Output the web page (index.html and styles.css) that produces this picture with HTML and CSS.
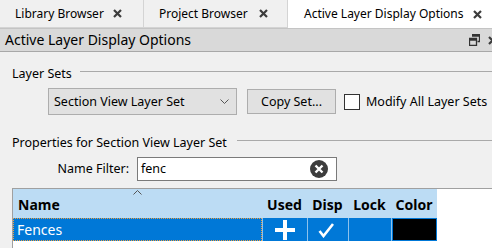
FILE: index.html
```html
<!DOCTYPE html>
<html>
<head>
<meta charset="utf-8">
<link rel="stylesheet" href="styles.css">
</head>
<body>
<div class="tabs">
  <div class="tab tab-lib"><span>Library Browser</span><svg class="x" viewBox="0 0 9 9"><path d="M1 1L8 8M8 1L1 8"/></svg></div>
  <div class="tab tab-proj"><span>Project Browser</span><svg class="x" viewBox="0 0 9 9"><path d="M1 1L8 8M8 1L1 8"/></svg></div>
  <div class="tab tab-active"><span>Active Layer Display Options</span><svg class="x" viewBox="0 0 9 9"><path d="M1 1L8 8M8 1L1 8"/></svg></div>
</div>
<div class="titlebar">
  <span class="title">Active Layer Display Options</span>
  <svg class="restore" viewBox="0 0 11 12"><path d="M3 0.5H10.5V7.5H8.5M3 2H10.5" fill="none"/><path d="M0.5 4.5H7.5V11.5H0.5Z M0.5 6H7.5" fill="none"/></svg>
  <svg class="tx" viewBox="0 0 9 9"><path d="M1 1L8 8M8 1L1 8"/></svg>
</div>
<div class="content">
  <div class="group-head"><span>Layer Sets</span><div class="gline"></div></div>
  <div class="set-row">
    <div class="combo"><span>Section View Layer Set</span><svg class="chev" viewBox="0 0 9 5"><path d="M0.5 0.5L4.5 4.5L8.5 0.5"/></svg></div>
    <div class="btn">Copy Set...</div>
    <div class="check"></div>
    <span class="check-label">Modify All Layer Sets</span>
  </div>
  <div class="group-head group-props"><span>Properties for Section View Layer Set</span><div class="gline"></div></div>
  <div class="filter-row">
    <span class="filter-label">Name Filter:</span>
    <div class="input"><span>fenc</span><svg class="clear" viewBox="0 0 18 18"><circle cx="9" cy="9" r="9"/><path d="M5.5 5.5L12.5 12.5M12.5 5.5L5.5 12.5"/></svg></div>
  </div>
  <div class="table">
    <div class="thead">
      <div class="th th-name">Name<svg class="sort" viewBox="0 0 9 5"><path d="M0.5 4.5L4.5 0.5L8.5 4.5"/></svg></div>
      <div class="th th-used">Used</div>
      <div class="th th-disp">Disp</div>
      <div class="th th-lock">Lock</div>
      <div class="th th-color">Color</div>
    </div>
    <div class="trow">
      <div class="td td-name">Fences</div>
      <div class="td td-used"><svg class="plus" viewBox="0 0 20 20"><path d="M8 0H12V8H20V12H12V20H8V12H0V8H8Z"/></svg></div>
      <div class="td td-disp"><svg class="tick" viewBox="0 0 16 16"><path d="M1.5 9L5.5 14L15 2"/></svg></div>
      <div class="td td-lock"></div>
      <div class="td td-color"><div class="swatch"></div></div>
    </div>
  </div>
</div>
</body>
</html>
```

FILE: styles.css
```css
* { box-sizing: border-box; }
html, body { margin: 0; padding: 0; }
body {
  width: 492px;
  height: 248px;
  overflow: hidden;
  background: #f0f0f0;
  font-family: "Noto Sans", "Open Sans", sans-serif;
  font-size: 12px;
  line-height: 16px;
  color: #000;
}
.tabs {
  display: flex;
  height: 28px;
  background: #f0f0f0;
}
.tab {
  display: flex;
  align-items: center;
  justify-content: space-between;
  height: 28px;
  padding-left: 15px;
  font-size: 12px;
  border-right: 1px solid #d4d4d4;
  border-bottom: 1px solid #d4d4d4;
}
.tab-lib { width: 144px; padding-right: 21px; }
.tab-proj { width: 144px; padding-right: 19px; }
.tab-active {
  flex: 1;
  background: #fff;
  border: none;
  padding-left: 16px;
  padding-right: 10px;
}
.x { width: 9px; height: 9px; }
.x path, .tx path { stroke: #3c3c3c; stroke-width: 2.2; fill: none; }
.titlebar {
  display: flex;
  align-items: center;
  height: 24px;
  background: #d9d9d9;
  border-top: 1px solid #c4c4c4;
  border-bottom: 1px solid #a8a8a8;
  padding-left: 5px;
}
.title { font-size: 14px; flex: 1; }
.restore { width: 11px; height: 12px; margin-right: 8px; }
.restore path { stroke: #333; stroke-width: 1.3; }
.tx { width: 9px; height: 9px; margin-right: -5px; }
.content { padding-left: 12px; }
.group-head {
  display: flex;
  height: 16px;
  margin-top: 14px;
  font-size: 12.5px;
}
.group-head .gline {
  flex: 1;
  height: 1px;
  margin-top: 5px;
  margin-left: 8px;
  background: #a9a9a9;
}
.group-props { margin-top: 20px; }
.group-props .gline { margin-left: 10px; }
.set-row {
  display: flex;
  align-items: center;
  height: 27px;
  margin-top: 6px;
  margin-left: 36px;
}
.combo {
  display: flex;
  align-items: center;
  justify-content: space-between;
  width: 189px;
  height: 27px;
  padding: 0 7px 0 5px;
  background: #e1e1e1;
  border: 1px solid #adadad;
  font-size: 12.5px;
}
.chev { width: 9px; height: 5px; }
.chev path, .sort path { stroke: #555; stroke-width: 1; fill: none; }
.btn {
  display: flex;
  align-items: center;
  justify-content: center;
  width: 89px;
  height: 25px;
  margin-left: 10px;
  background: #e1e1e1;
  border: 1px solid #adadad;
  font-size: 12.5px;
}
.check {
  width: 16px;
  height: 16px;
  margin-left: 8px;
  background: #fff;
  border: 1px solid #333;
}
.check-label { margin-left: 6px; font-size: 12.5px; white-space: nowrap; }
.filter-row {
  display: flex;
  align-items: center;
  margin-top: 6px;
  height: 24px;
}
.filter-label {
  width: 117px;
  text-align: right;
  font-size: 12.5px;
}
.input {
  display: flex;
  align-items: center;
  justify-content: space-between;
  width: 200px;
  height: 24px;
  margin-left: 8px;
  padding: 0 8px 0 3px;
  background: #fff;
  border: 1px solid #7a7a7a;
  font-size: 12.5px;
}
.clear { width: 18px; height: 18px; }
.clear circle { fill: #3d3d3d; }
.clear path { stroke: #fff; stroke-width: 2.4; }
.table {
  margin-top: 7px;
  height: 60px;
  background: #fff;
  border-left: 1px solid #a0a0a0;
  border-top: 1px solid #a0a0a0;
}
.thead, .trow {
  display: grid;
  grid-template-columns: 249px 45px 41px 43px 46px;
  width: 424px;
}
.thead {
  height: 29px;
  background: #bcdcf4;
  font-weight: bold;
  font-size: 14px;
}
.th {
  display: flex;
  align-items: center;
  justify-content: center;
  padding-top: 3px;
}
.th-name {
  position: relative;
  justify-content: flex-start;
  padding-left: 5px;
}
.sort {
  position: absolute;
  left: 120px;
  top: 1px;
  width: 9px;
  height: 5px;
}
.trow {
  height: 23px;
  background: #0078d7;
  color: #fff;
  font-size: 14px;
}
.td {
  display: flex;
  align-items: center;
  justify-content: center;
  border-left: 1px solid #8ec2ec;
}
.td-name {
  justify-content: flex-start;
  padding-left: 3px;
  border: 1px dotted #f0a040;
}
.plus { width: 20px; height: 20px; }
.plus path { fill: #fff; }
.tick { width: 16px; height: 16px; margin-left: -5px; }
.tick path { stroke: #fff; stroke-width: 2.6; fill: none; }
.td-color { padding: 1px; }
.swatch { width: 100%; height: 100%; background: #000; }
```
